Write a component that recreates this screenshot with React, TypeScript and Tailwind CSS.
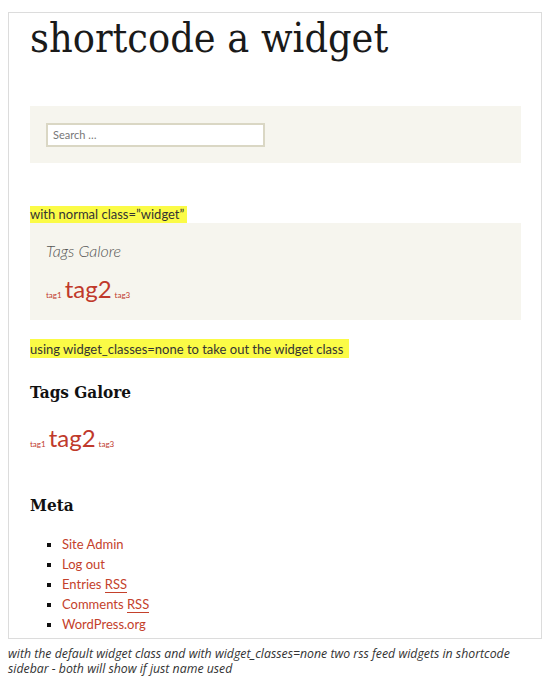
import React from "react";

const serif = { fontFamily: '"DejaVu Serif", serif', fontStretch: "condensed" as const };
const sans = { fontFamily: 'Lato, "Liberation Sans", sans-serif' };

function TagCloud() {
  return (
    <div className="flex items-baseline gap-[3px] text-[#c0392b]" style={sans}>
      <span className="text-[8px]">tag1</span>
      <span className="text-[24px] leading-none">tag2</span>
      <span className="text-[8px]">tag3</span>
    </div>
  );
}

export default function App() {
  const links = ["Site Admin", "Log out", "Entries RSS", "Comments RSS", "WordPress.org"];
  return (
    <div className="w-[550px] h-[680px] bg-white relative">
      <div className="pt-3 px-2">
        <div className="border border-[#dcdcdc] h-[627px] pl-[21px] pr-[20px] overflow-hidden">
          <h1 className="text-[41px] leading-none text-[#1a1a1a] mt-[5px]" style={serif}>
            shortcode a widget
          </h1>
          <div className="mt-[47px] bg-[#f6f5ee] h-[57px] px-4 pt-[17px]">
            <div className="w-[219px] h-[24px] bg-white border-2 border-[#dad7c4] flex items-center px-[5px]">
              <span className="text-[11px] text-[#777]" style={sans}>Search …</span>
            </div>
          </div>
          <div className="mt-[43px] text-[13px] leading-[17px] text-[#333]" style={sans}>
            <span className="bg-[#fbfb46] pr-[3px] pb-[1px]">with normal class=”widget”</span>
          </div>
          <div className="bg-[#f6f5ee] h-[97px] px-4 pt-[16px]">
            <div className="text-[16px] italic font-light text-[#555]" style={sans}>Tags Galore</div>
            <div className="mt-[14px]"><TagCloud /></div>
          </div>
          <div className="mt-[21px] text-[13px] leading-[17px] text-[#333]" style={sans}>
            <span className="bg-[#fbfb46] pr-[6px] pt-[2px] pb-[1px]">using widget_classes=none to take out the widget class</span>
          </div>
          <h2 className="mt-[22px] text-[17px] font-bold text-[#111]" style={serif}>Tags Galore</h2>
          <div className="mt-[20px]"><TagCloud /></div>
          <h2 className="mt-[43px] text-[17px] font-bold text-[#111]" style={serif}>Meta</h2>
          <ul className="mt-[16px] pl-[32px] list-[square] text-[13px] leading-[20px] text-[#c4412b]" style={sans}>
            {links.map((l) => {
              const parts = l.split(" RSS");
              return (
                <li key={l} className="marker:text-[#111]">
                  {parts.length > 1 ? (
                    <>
                      {parts[0]} <span className="border-b border-[#c4412b]">RSS</span>
                    </>
                  ) : (
                    l
                  )}
                </li>
              );
            })}
          </ul>
        </div>
      </div>
      <div className="px-2 pt-[7px] text-[12.3px] leading-[15px] italic text-[#333]" style={{ fontFamily: '"Open Sans", sans-serif' }}>
        with the default widget class and with widget_classes=none two rss feed widgets in shortcode sidebar - both will show if just name used
      </div>
    </div>
  );
}
